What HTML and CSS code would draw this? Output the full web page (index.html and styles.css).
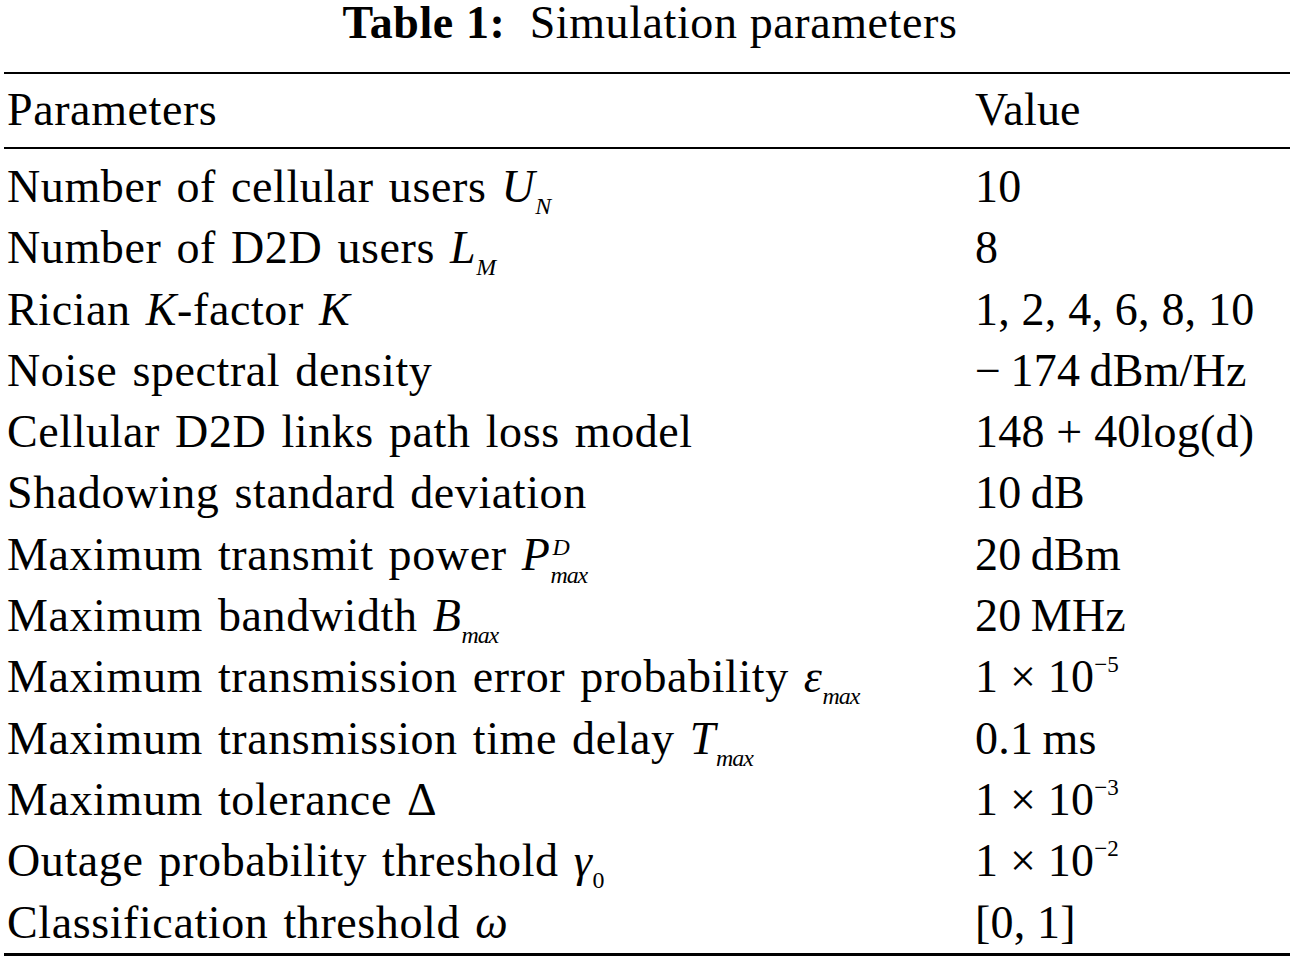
FILE: index.html
```html
<!DOCTYPE html>
<html lang="en">
<head>
<meta charset="utf-8">
<title>Table 1: Simulation parameters</title>
<link rel="stylesheet" href="styles.css">
</head>
<body>
<div class="page">
  <div class="caption"><b>Table 1:</b>&nbsp; Simulation parameters</div>
  <table class="params">
    <thead>
      <tr><th class="c1">Parameters</th><th class="c2">Value</th></tr>
    </thead>
    <tbody>
      <tr><td class="c1">Number of cellular users <i>U</i><span class="sub"><i>N</i></span></td><td class="c2">10</td></tr>
      <tr><td class="c1">Number of D2D users <i>L</i><span class="sub"><i>M</i></span></td><td class="c2">8</td></tr>
      <tr><td class="c1">Rician <i>K</i>-factor <i>K</i></td><td class="c2">1, 2, 4, 6, 8, 10</td></tr>
      <tr><td class="c1">Noise spectral density</td><td class="c2">&minus;&thinsp;174&thinsp;dBm/Hz</td></tr>
      <tr><td class="c1">Cellular D2D links path loss model</td><td class="c2">148 + 40log(d)</td></tr>
      <tr><td class="c1">Shadowing standard deviation</td><td class="c2">10&thinsp;dB</td></tr>
      <tr><td class="c1">Maximum transmit power <i>P</i><span class="supsub"><span class="ss-sup"><i>D</i></span><span class="ss-sub"><i class="mx">max</i></span></span></td><td class="c2">20&thinsp;dBm</td></tr>
      <tr><td class="c1">Maximum bandwidth <i>B</i><span class="sub"><i class="mx">max</i></span></td><td class="c2">20&thinsp;MHz</td></tr>
      <tr><td class="c1">Maximum transmission error probability <i>&epsilon;</i><span class="sub"><i class="mx">max</i></span></td><td class="c2">1 &times; 10<span class="sup">&minus;5</span></td></tr>
      <tr><td class="c1">Maximum transmission time delay <i>T</i><span class="sub"><i class="mx">max</i></span></td><td class="c2">0.1&thinsp;ms</td></tr>
      <tr><td class="c1">Maximum tolerance &Delta;</td><td class="c2">1 &times; 10<span class="sup">&minus;3</span></td></tr>
      <tr><td class="c1">Outage probability threshold <i>&gamma;</i><span class="sub">0</span></td><td class="c2">1 &times; 10<span class="sup">&minus;2</span></td></tr>
      <tr><td class="c1">Classification threshold <i>&omega;</i></td><td class="c2">[0, 1]</td></tr>
    </tbody>
  </table>
</div>
</body>
</html>
```

FILE: styles.css
```css
html, body {
  margin: 0;
  padding: 0;
  background: #ffffff;
}

body {
  font-family: "Liberation Serif", "Times New Roman", serif;
  color: #000000;
  font-size: 46px;
}

.page {
  width: 1296px;
}

.caption {
  text-align: center;
  line-height: 41px;
  height: 41px;
  padding-top: 2px;
  margin-bottom: 29px;
  padding-left: 4px;
  letter-spacing: 0.6px;
}

.caption b {
  font-weight: bold;
}

.params {
  margin-left: 4px;
  width: 1286px;
  border-collapse: collapse;
  border-top: 2px solid #000;
  border-bottom: 3px solid #000;
}

.params th,
.params td {
  font-weight: normal;
  text-align: left;
  padding: 0;
  white-space: nowrap;
  vertical-align: top;
}

.params thead tr {
  border-bottom: 2px solid #000;
}

.params th {
  line-height: 61px;
  padding-top: 5px;
  padding-bottom: 7px;
}

.params td {
  line-height: 61.3px;
  height: 61.3px;
}

.params tbody tr:first-child td {
  padding-top: 7px;
}

.c1 {
  width: 968px;
  padding-left: 3px !important;
  letter-spacing: 0.6px;
  word-spacing: 3px;
}

.c2 {
  padding-left: 0;
  letter-spacing: 0.2px;
}

.sub {
  font-size: 0.52em;
  line-height: 0;
  vertical-align: -0.5em;
  letter-spacing: 0;
}

.sup {
  font-size: 0.5em;
  line-height: 0;
  vertical-align: 0.85em;
  letter-spacing: 0;
}

.mx {
  letter-spacing: -1px;
}

.supsub {
  display: inline-block;
  font-size: 0.52em;
  line-height: 1;
  vertical-align: -0.55em;
  letter-spacing: 0;
  margin-top: -20px;
  margin-bottom: -20px;
}

.ss-sup {
  display: block;
  line-height: 1;
  margin-left: 2px;
  margin-bottom: 4px;
}

.ss-sub {
  display: block;
  line-height: 1;
}
```
